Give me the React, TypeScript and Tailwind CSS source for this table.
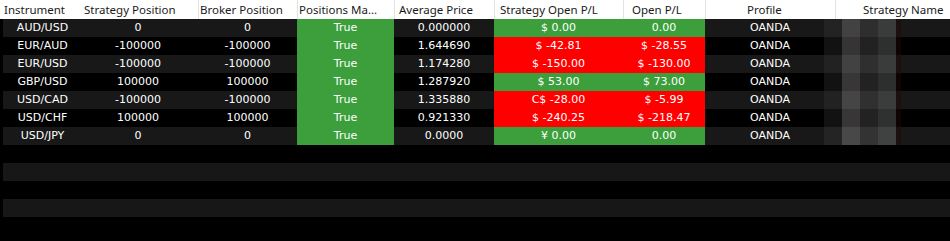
import React from "react";

type Row = {
  inst: string;
  sp: string;
  bp: string;
  avg: string;
  sopl: string;
  sGood: boolean;
  opl: string;
  oGood: boolean;
};

const rows: Row[] = [
  { inst: "AUD/USD", sp: "0", bp: "0", avg: "0.000000", sopl: "$ 0.00", sGood: true, opl: "0.00", oGood: true },
  { inst: "EUR/AUD", sp: "-100000", bp: "-100000", avg: "1.644690", sopl: "$ -42.81", sGood: false, opl: "$ -28.55", oGood: false },
  { inst: "EUR/USD", sp: "-100000", bp: "-100000", avg: "1.174280", sopl: "$ -150.00", sGood: false, opl: "$ -130.00", oGood: false },
  { inst: "GBP/USD", sp: "100000", bp: "100000", avg: "1.287920", sopl: "$ 53.00", sGood: true, opl: "$ 73.00", oGood: true },
  { inst: "USD/CAD", sp: "-100000", bp: "-100000", avg: "1.335880", sopl: "C$ -28.00", sGood: false, opl: "$ -5.99", oGood: false },
  { inst: "USD/CHF", sp: "100000", bp: "100000", avg: "0.921330", sopl: "$ -240.25", sGood: false, opl: "$ -218.47", oGood: false },
  { inst: "USD/JPY", sp: "0", bp: "0", avg: "0.0000", sopl: "¥ 0.00", sGood: true, opl: "0.00", oGood: true },
];

const blur: string[][] = [
  ["#232323", "#424242", "#2e2e2e", "#3a3c3c", "#1c0f0f"],
  ["#121212", "#363434", "#222222", "#2e302f", "#0e0404"],
  ["#222222", "#424242", "#2f2f2f", "#3a3c3c", "#1c0f0f"],
  ["#121212", "#383636", "#222222", "#2d2f2f", "#0e0404"],
  ["#222222", "#454545", "#303030", "#3b3d3d", "#1c0f0f"],
  ["#121212", "#383636", "#222222", "#2f3131", "#0e0404"],
  ["#242424", "#484848", "#333333", "#404242", "#1c0f0f"],
];

const headFont = { fontFamily: '"Noto Sans", "Open Sans", sans-serif' };
const cellFont = { fontFamily: '"DejaVu Sans", Verdana, sans-serif' };

export default function App() {
  const cols = "grid grid-cols-[75px_120px_99px_97px_100px_129px_82px_130px_1fr]";
  return (
    <div className="w-[950px] h-[241px] bg-black overflow-hidden">
      {/* header */}
      <div
        className="grid grid-cols-[78px_120px_99px_97px_100px_129px_82px_130px_1fr] h-[19px] bg-white text-[11.5px] text-[#1a1a1a] leading-[19px] whitespace-nowrap"
        style={headFont}
      >
        <div className="pl-[4px]">Instrument</div>
        <div className="pl-[6px]">Strategy Position</div>
        <div className="border-l border-[#e3e3e3] pl-[1px]">Broker Position</div>
        <div className="border-l border-[#e3e3e3] pl-[1px]">Positions Ma...</div>
        <div className="border-l border-[#e3e3e3] pl-[4px]">Average Price</div>
        <div className="border-l border-[#e3e3e3] pl-[5px]">Strategy Open P/L</div>
        <div className="border-l border-[#e3e3e3] pl-[8px]">Open P/L</div>
        <div className="border-l border-[#e3e3e3] pl-[41px]">Profile</div>
        <div className="border-l border-[#e3e3e3] pl-[27px]">Strategy Name</div>
      </div>

      {/* body */}
      <div className="relative pl-[3px] text-[11px] text-white" style={cellFont}>
        {rows.map((r, i) => (
          <div
            key={r.inst}
            className={`${cols} h-[18px] leading-[18px] text-center ${i % 2 === 0 ? "bg-[#181818]" : "bg-black"}`}
          >
            <div className="pl-[4px]">{r.inst}</div>
            <div>{r.sp}</div>
            <div>{r.bp}</div>
            <div className="bg-[#3c9f3c]">True</div>
            <div>{r.avg}</div>
            <div className={r.sGood ? "bg-[#3c9f3c]" : "bg-[#ff0000]"}>{r.sopl}</div>
            <div className={r.oGood ? "bg-[#3c9f3c]" : "bg-[#ff0000]"}>{r.opl}</div>
            <div>OANDA</div>
            <div></div>
          </div>
        ))}
        {[7, 8, 9, 10, 11].map((i) => (
          <div key={i} className={`h-[18px] ${i % 2 === 0 ? "bg-[#171717]" : "bg-black"}`} />
        ))}

        {/* redaction overlay */}
        <div className="absolute left-[824px] top-0 flex flex-col">
          {blur.map((row, ri) => (
            <div key={ri} className="flex h-[18px]">
              {row.map((c, ci) => (
                <div
                  key={ci}
                  className={ci === 4 ? "w-[5px] h-[18px]" : "w-[18px] h-[18px]"}
                  style={{ backgroundColor: c }}
                />
              ))}
            </div>
          ))}
        </div>
      </div>
    </div>
  );
}
